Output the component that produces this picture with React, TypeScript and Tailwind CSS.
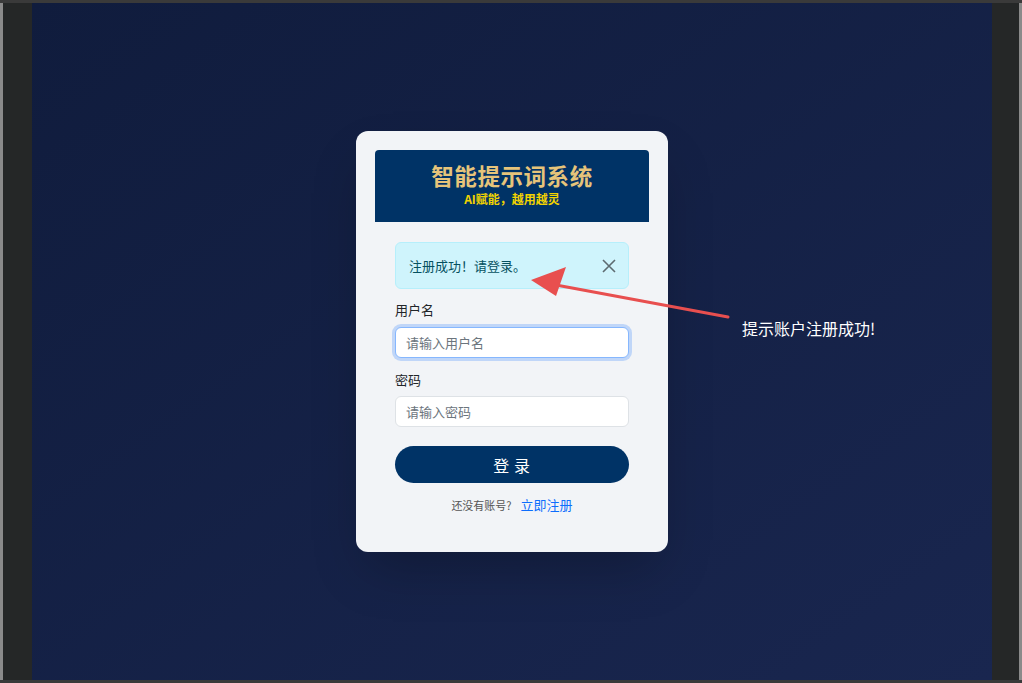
import React from 'react';

// Login card shown inside a captured browser window, with a red callout annotation
const font = { fontFamily: '"Noto Sans CJK SC", "Noto Sans", sans-serif' };

function Arrow() {
  return (
    <svg className="absolute left-0 top-0 pointer-events-none" width="1022" height="683">
      <line x1="728" y1="317" x2="556" y2="285" stroke="#e84f4f" strokeWidth="3" strokeLinecap="round" />
      <polygon points="531,280 566,267 556,296" fill="#e84f4f" />
    </svg>
  );
}

const App: React.FC = () => {
  return (
    <div className="relative w-[1022px] h-[683px] bg-[#1c1c1c] overflow-hidden" style={font}>
      {/* window frame */}
      <div className="h-[3px] bg-[#3a3a3a]" />
      <div className="flex h-[677px]">
        <div className="w-[3px] bg-[#8a8a8a]" />
        <div className="w-[29px] bg-[#252727]" />
        {/* page */}
        <div className="w-[960px] bg-gradient-to-br from-[#101c3d] to-[#19264f] flex justify-center pt-[128px]">
          <div className="w-[312px] h-[421px] bg-[#f2f4f7] rounded-xl shadow-2xl px-[19px] pt-[19px]">
            <div className="h-[72px] bg-[#003366] rounded-t flex flex-col items-center pt-[11px]">
              <div className="text-[22.5px] leading-[28px] font-bold text-[#e6c47a] tracking-wide">智能提示词系统</div>
              <div className="text-[12px] leading-[14px] font-bold text-[#f2d300] mt-[3px]">AI赋能，越用越灵</div>
            </div>
            <div className="px-[20px]">
              <div className="mt-[20px] h-[47px] rounded-md bg-[#cff4fc] border border-[#b6effb] flex items-center justify-between pl-[13px] pr-[12px]">
                <span className="text-[13px] text-[#055160]">注册成功！请登录。</span>
                <svg width="14" height="14" viewBox="0 0 14 14">
                  <path d="M1 1L13 13M13 1L1 13" stroke="#5d6b70" strokeWidth="1.6" />
                </svg>
              </div>
              <div className="mt-[12px] text-[13px] leading-[18px] text-[#212529]">用户名</div>
              <div className="mt-[8px] h-[31px] rounded-md bg-white border border-[#86b7fe] shadow-[0_0_0_3px_rgba(13,110,253,0.22)] flex items-center px-[10px] text-[13px] text-[#6c757d]">
                请输入用户名
              </div>
              <div className="mt-[13px] text-[13px] leading-[18px] text-[#212529]">密码</div>
              <div className="mt-[7px] h-[31px] rounded-md bg-white border border-[#dee2e6] flex items-center px-[10px] text-[13px] text-[#6c757d]">
                请输入密码
              </div>
              <div className="mt-[19px] h-[37px] rounded-full bg-[#003366] flex items-center justify-center text-white text-[16px] tracking-[0.3em] pl-[4px]">
                登录
              </div>
              <div className="mt-[12px] flex items-center justify-center gap-[9px]">
                <span className="text-[11px] text-[#555]">还没有账号?</span>
                <span className="text-[13px] text-[#0d6efd]">立即注册</span>
              </div>
            </div>
          </div>
        </div>
        <div className="w-[27px] bg-[#252727]" />
        <div className="w-[3px] bg-[#8a8a8a]" />
      </div>
      <div className="h-[3px] bg-[#3a3a3a]" />
      <Arrow />
      <div className="absolute left-[742px] top-[317px] text-[16px] leading-[22px] text-white">提示账户注册成功!</div>
    </div>
  );
};

export default App;
